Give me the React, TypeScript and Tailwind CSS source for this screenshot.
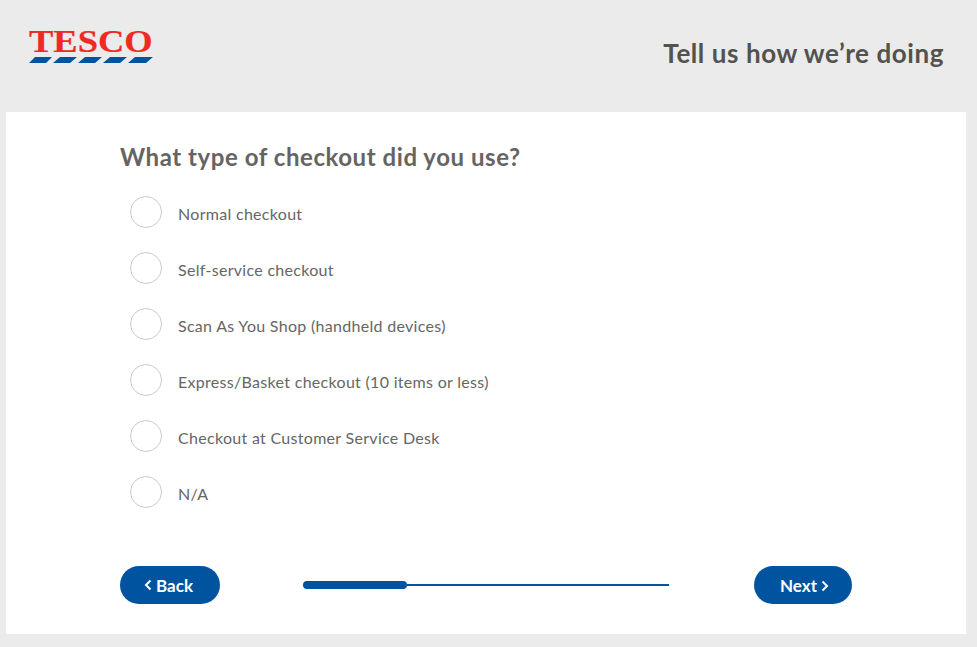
const options = [
  "Normal checkout",
  "Self-service checkout",
  "Scan As You Shop (handheld devices)",
  "Express/Basket checkout (10 items or less)",
  "Checkout at Customer Service Desk",
  "N/A",
];

function Logo() {
  return (
    <div className="flex w-[124px] flex-col">
      <span className="h-[26px] origin-left scale-x-[1.14] text-[32px] leading-[22px] font-bold whitespace-nowrap text-[#ee2a24] font-['Liberation_Serif',serif] [-webkit-text-stroke:0.2px_#ee2a24]">
        TESCO
      </span>
      <svg width="124" height="6" viewBox="0 0 124 6" className="mt-[1px] block">
        <path
          d="M6 0H23L17 6H0ZM31 0H48L41 6H24ZM56 0H73L66 6H49ZM81 0H98L91 6H74ZM106 0H124L117 6H99Z"
          fill="#00539f"
        />
      </svg>
    </div>
  );
}

export default function App() {
  return (
    <div className="flex h-[647px] flex-col overflow-hidden bg-[#ebebeb] font-['Lato',sans-serif]">
      <header className="flex h-[112px] items-start justify-between pr-[33px] pl-[29px]">
        <div className="pt-[30px]">
          <Logo />
        </div>
        <h2 className="pt-[37px] text-[26px] leading-[32px] font-bold tracking-[0.57px] text-[#54524f]">
          Tell us how we’re doing
        </h2>
      </header>
      <main className="mr-[11px] ml-[6px] flex h-[522px] flex-col bg-white px-[114px]">
        <h1 className="pt-[30px] text-[24px] leading-[30px] font-bold tracking-[0.55px] text-[#666462]">
          What type of checkout did you use?
        </h1>
        <div className="mt-[24px] flex flex-col gap-[24px] pl-[10px]">
          {options.map((label) => (
            <label key={label} className="flex h-[32px] items-center gap-[16px]">
              <span className="size-[32px] rounded-full border border-[#cccccc] bg-white" />
              <span className="pt-[3px] text-[16px] leading-[20px] tracking-[0.3px] text-[#666666]">{label}</span>
            </label>
          ))}
        </div>
        <div className="mt-[58px] flex items-center justify-between">
          <button className="flex h-[38px] w-[100px] items-center justify-center gap-[4px] rounded-full bg-[#00539f] pr-[3px] text-[17px] font-bold text-white">
            <svg width="8" height="12" viewBox="0 0 8 12" fill="none" stroke="white" strokeWidth="2">
              <path d="M6.5 1.5 2 6l4.5 4.5" />
            </svg>
            <span className="pt-[2px]">Back</span>
          </button>
          <div className="mr-[2px] flex w-[366px] items-center">
            <div className="h-[8px] w-[104px] rounded-full bg-[#00539f]" />
            <div className="h-[2px] flex-1 bg-[#00539f]" />
          </div>
          <button className="flex h-[38px] w-[98px] items-center justify-center gap-[4px] rounded-full bg-[#00539f] pl-[3px] text-[17px] font-bold text-white">
            <span className="pt-[2px]">Next</span>
            <svg width="8" height="12" viewBox="0 0 8 12" fill="none" stroke="white" strokeWidth="2" className="mt-[2px]">
              <path d="M1.5 1.5 6 6l-4.5 4.5" />
            </svg>
          </button>
        </div>
      </main>
    </div>
  );
}
